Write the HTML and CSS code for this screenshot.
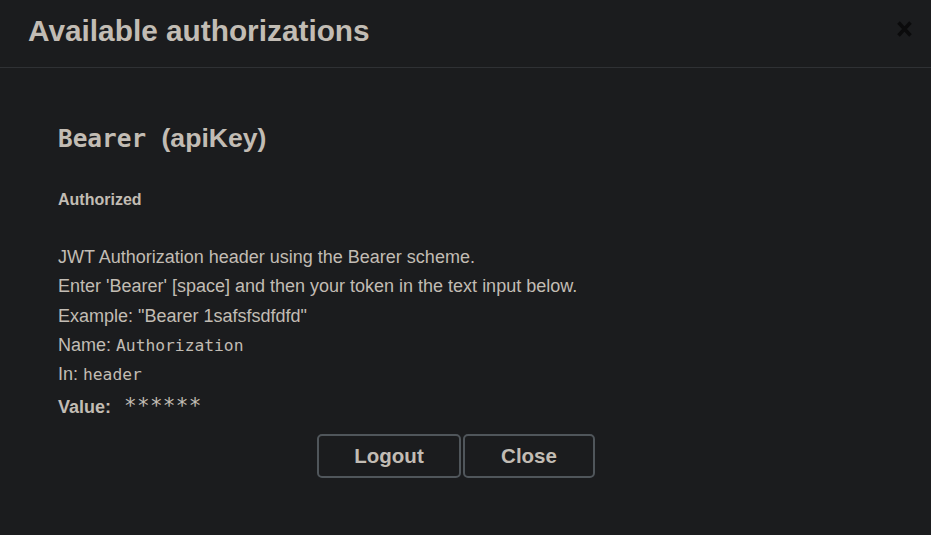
FILE: index.html
```html
<!DOCTYPE html>
<html>
<head>
<meta charset="utf-8">
<link rel="stylesheet" href="styles.css">
</head>
<body>
<div class="modal">
  <div class="modal-header">
    <h3 class="modal-title">Available authorizations</h3>
    <button class="close-x" aria-label="Close">
      <svg width="15" height="16" viewBox="0 0 15 16"><path d="M1.5 1.5 L13.5 14.5 M13.5 1.5 L1.5 14.5" stroke="#0b0b0c" stroke-width="3.5" stroke-linecap="butt"/></svg>
    </button>
  </div>
  <div class="modal-body">
    <h4 class="scheme"><code class="scheme-name">Bearer</code> (apiKey)</h4>
    <h6 class="status">Authorized</h6>
    <div class="desc">
      <p>JWT Authorization header using the Bearer scheme.</p>
      <p>Enter 'Bearer' [space] and then your token in the text input below.</p>
      <p>Example: "Bearer 1safsfsdfdfd"</p>
    </div>
    <p class="row">Name: <code>Authorization</code></p>
    <p class="row">In: <code>header</code></p>
    <div class="value-row"><span class="value-label">Value:</span><code class="value-code">******</code></div>
    <div class="btn-wrapper">
      <button class="btn">Logout</button>
      <button class="btn btn-close">Close</button>
    </div>
  </div>
</div>
</body>
</html>
```
FILE: styles.css
```css
html, body {
  margin: 0;
  padding: 0;
  background: #1b1c1e;
  height: 100%;
}
body {
  font-family: "Liberation Sans", Arial, sans-serif;
  color: #c2bcb4;
}
.modal-header {
  height: 67px;
  border-bottom: 1px solid #2f3134;
  display: flex;
  align-items: center;
  justify-content: space-between;
  padding: 0 19px 0 28px;
}
.modal-title {
  margin: 0;
  font-size: 29.8px;
  font-weight: bold;
  color: #c2bcb4;
  position: relative;
  top: -3px;
}
.close-x {
  background: none;
  border: 0;
  padding: 0;
  width: 15px;
  height: 16px;
  position: relative;
  top: -5px;
}
.close-x svg { display: block; }
.modal-body {
  padding: 0 77px 0 58px;
}
.scheme {
  margin: 0;
  padding-top: 54px;
  font-size: 26.6px;
  font-weight: bold;
  line-height: 32px;
}
.scheme-name {
  font-family: "DejaVu Sans Mono", monospace;
  font-size: 24.4px;
  font-weight: bold;
  margin-right: 8px;
}
.status {
  margin: 0;
  padding-top: 35px;
  font-size: 16px;
  font-weight: bold;
  line-height: 20px;
}
.desc {
  padding-top: 33px;
}
.desc p, .row {
  margin: 0;
  font-size: 18px;
  line-height: 29.3px;
}
.row code {
  font-family: "DejaVu Sans Mono", monospace;
  font-size: 16.3px;
}
.value-row {
  display: flex;
  align-items: baseline;
  height: 31px;
  padding-top: 5px;
}
.value-label {
  font-size: 18px;
  font-weight: bold;
  margin-right: 13px;
}
.value-code {
  font-family: "DejaVu Sans Mono", monospace;
  font-size: 21px;
  letter-spacing: 0.3px;
}
.btn-wrapper {
  display: flex;
  justify-content: center;
  gap: 2px;
  margin-top: 9px;
}
.btn {
  font-family: "Liberation Sans", Arial, sans-serif;
  font-size: 20.5px;
  font-weight: bold;
  color: #c2bcb4;
  background: #1b1c1e;
  border: 2.5px solid #50565b;
  border-radius: 5px;
  height: 44px;
  width: 144px;
  padding: 0;
}
.btn-close {
  width: 132px;
}
```
